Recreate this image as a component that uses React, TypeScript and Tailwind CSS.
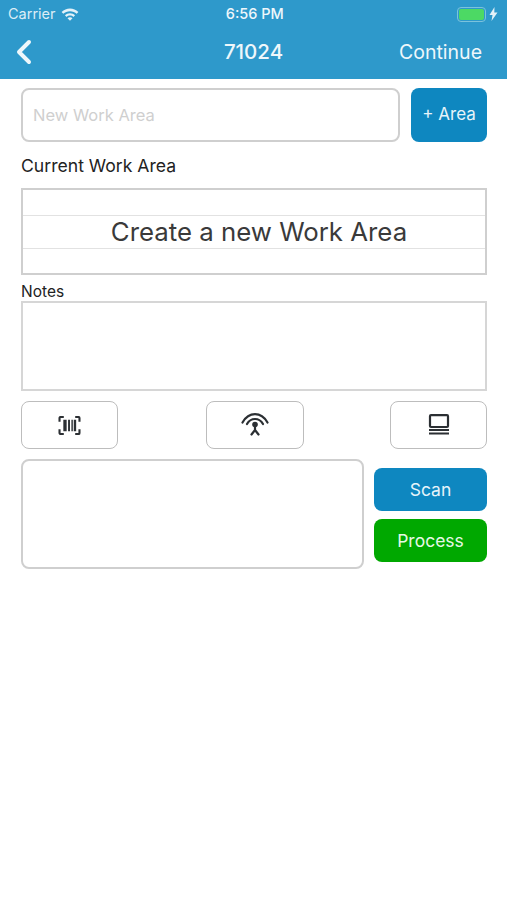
import { ChevronLeft } from "lucide-react";

const font = "font-['Inter','Liberation_Sans',sans-serif]";

const BarcodeIcon = () => (
  <svg width="23" height="19" viewBox="0 0 24 20" fill="none">
    <path d="M1.500 6V2.200C1.500 1.500 2 1 2.700 1H6M18 1h3.300c.7 0 1.200.5 1.200 1.200V6M22.500 14v3.800c0 .7-.5 1.200-1.200 1.200H18M6 19H2.700c-.7 0-1.200-.5-1.200-1.200V14" stroke="#2b2f33" strokeWidth="2.200" />
    <path d="M5.500 4h3.500v12H5.500zM10.500 4h2v12h-2zM14 4h1.500v12H14zM16.500 4h2.500v12h-2.500z" fill="#2b2f33" />
  </svg>
);

const AntennaIcon = () => (
  <svg className="-mt-[2px]" width="28" height="23" viewBox="0 0 28 23" fill="none" stroke="#2b2f33" strokeLinecap="round">
    <path d="M1.500 9.500C5 3.500 9.500 1.200 14 1.200S23 3.500 26.500 9.500" strokeWidth="2.200" />
    <path d="M6 11C8 7.500 11 6 14 6s6 1.500 8 5" strokeWidth="2.200" />
    <circle cx="14" cy="11.500" r="2.800" fill="#2b2f33" stroke="none" />
    <path d="M14 12v5.500M14 17l-3.500 4.500M14 17l3.500 4.500" strokeWidth="2.200" />
  </svg>
);

const TerminalIcon = () => (
  <svg className="-mt-[2px]" width="22" height="21" viewBox="0 0 22 21" fill="none" stroke="#2b2f33">
    <rect x="2" y="1.200" width="18" height="11.800" rx="1" strokeWidth="2.200" />
    <path d="M1 16h20M1 19.500h20" strokeWidth="2.200" />
  </svg>
);

const WifiIcon = () => (
  <svg width="18" height="13" viewBox="0 0 18 13" fill="#e3f1f8">
    <path d="M9 .6C5.800.6 2.900 1.900.6 4l1.700 1.800C4 4.200 6.400 3.200 9 3.200s5 1 6.700 2.600L17.400 4C15.100 1.900 12.200.6 9 .6z" />
    <path d="M9 5.200c-2 0-3.800.8-5.100 2.100l1.700 1.700C6.500 8.100 7.700 7.600 9 7.600s2.500.5 3.400 1.400l1.700-1.700C12.800 6 11 5.200 9 5.200z" />
    <path d="M9 9.200c-1 0-1.800.4-2.500 1L9 12.800l2.500-2.600c-.7-.6-1.500-1-2.500-1z" />
  </svg>
);

const IconButton = ({ children, className }: { children: React.ReactNode; className: string }) => (
  <button className={`h-[48px] flex items-center justify-center rounded-lg border border-[#bdbdbd] bg-white ${className}`}>
    {children}
  </button>
);

export default function App() {
  return (
    <div className={`${font} w-[507px] h-[900px] bg-white flex flex-col overflow-hidden`}>
      {/* HEADER */}
      <header className="h-[79px] bg-[#2e99cb] px-2 text-[#eef7fb]">
        <div className="h-[28px] flex items-center justify-between">
          <div className="flex items-center gap-[5px]">
            <span className="text-[14.500px] text-[#dcedf6]">Carrier</span>
            <WifiIcon />
          </div>
          <span className="text-[14.500px] font-medium -ml-[26px]">6:56 PM</span>
          <div className="flex items-center gap-[3px] pr-[1px]">
            <div className="w-[29px] h-[15px] rounded-[4px] border border-[#7cc2dc] p-[1px]">
              <div className="w-full h-full rounded-[2px] bg-[#4cd964]" />
            </div>
            <svg width="9" height="14" viewBox="0 0 9 14" fill="#e3f1f8">
              <path d="M5.500 0L0.500 8h3l-1 6L8.500 5.500h-3.200z" />
            </svg>
          </div>
        </div>
        <div className="h-[49px] flex items-center justify-between relative">
          <ChevronLeft className="-ml-[4px] -mt-[2px]" size={40} strokeWidth={2.400} color="#eef7fb" />
          <span className="absolute left-0 right-0 text-center text-[20.500px] font-medium">71024</span>
          <span className="text-[19.500px] mr-[17px]">Continue</span>
        </div>
      </header>

      <main className="pl-[21px] pr-[20px] pt-[9px] flex flex-col">
        <div className="flex gap-[11px] h-[54px]">
          <div className="flex-1 rounded-lg border-2 border-[#cfcfcf] flex items-center px-[10px] text-[16.500px] text-[#cfcfcf]">
            New Work Area
          </div>
          <button className="w-[76px] rounded-lg bg-[#0e87c0] text-[#e6f4fa] text-[17px]">+ Area</button>
        </div>

        <div className="mt-[13px] h-[22px] leading-[22px] text-[17.600px] text-[#222]">Current Work Area</div>

        {/* picker */}
        <div className="mt-[11px] h-[87px] border-2 border-[#cfcfcf] flex flex-col">
          <div className="h-[26px] border-b border-[#e2e2e2]" />
          <div className="h-[33px] border-b border-[#e2e2e2] flex items-center justify-center pl-[10px] text-[25.800px] text-[#3a3a3a]">
            Create a new Work Area
          </div>
          <div className="flex-1" />
        </div>

        <div className="mt-[8px] h-[18px] leading-[18px] text-[15.500px] text-[#222]">Notes</div>
        <div className="h-[90px] border-2 border-[#d6d6d6]" />

        <div className="mt-[10px] flex">
          <IconButton className="w-[97px]"><BarcodeIcon /></IconButton>
          <IconButton className="w-[98px] ml-[88px]"><AntennaIcon /></IconButton>
          <IconButton className="w-[97px] ml-[86px]"><TerminalIcon /></IconButton>
        </div>

        <div className="mt-[10px] flex gap-[10px]">
          <div className="w-[343px] h-[110px] rounded-lg border-2 border-[#cfcfcf]" />
          <div className="flex-1 pt-[9px] flex flex-col gap-[8px]">
            <button className="h-[43px] pt-[2px] rounded-lg bg-[#0e87c0] text-[#e6f4fa] text-[17.500px]">Scan</button>
            <button className="h-[43px] pt-[2px] rounded-lg bg-[#00a800] text-[#e6f9e6] text-[17.500px]">Process</button>
          </div>
        </div>
      </main>
    </div>
  );
}
